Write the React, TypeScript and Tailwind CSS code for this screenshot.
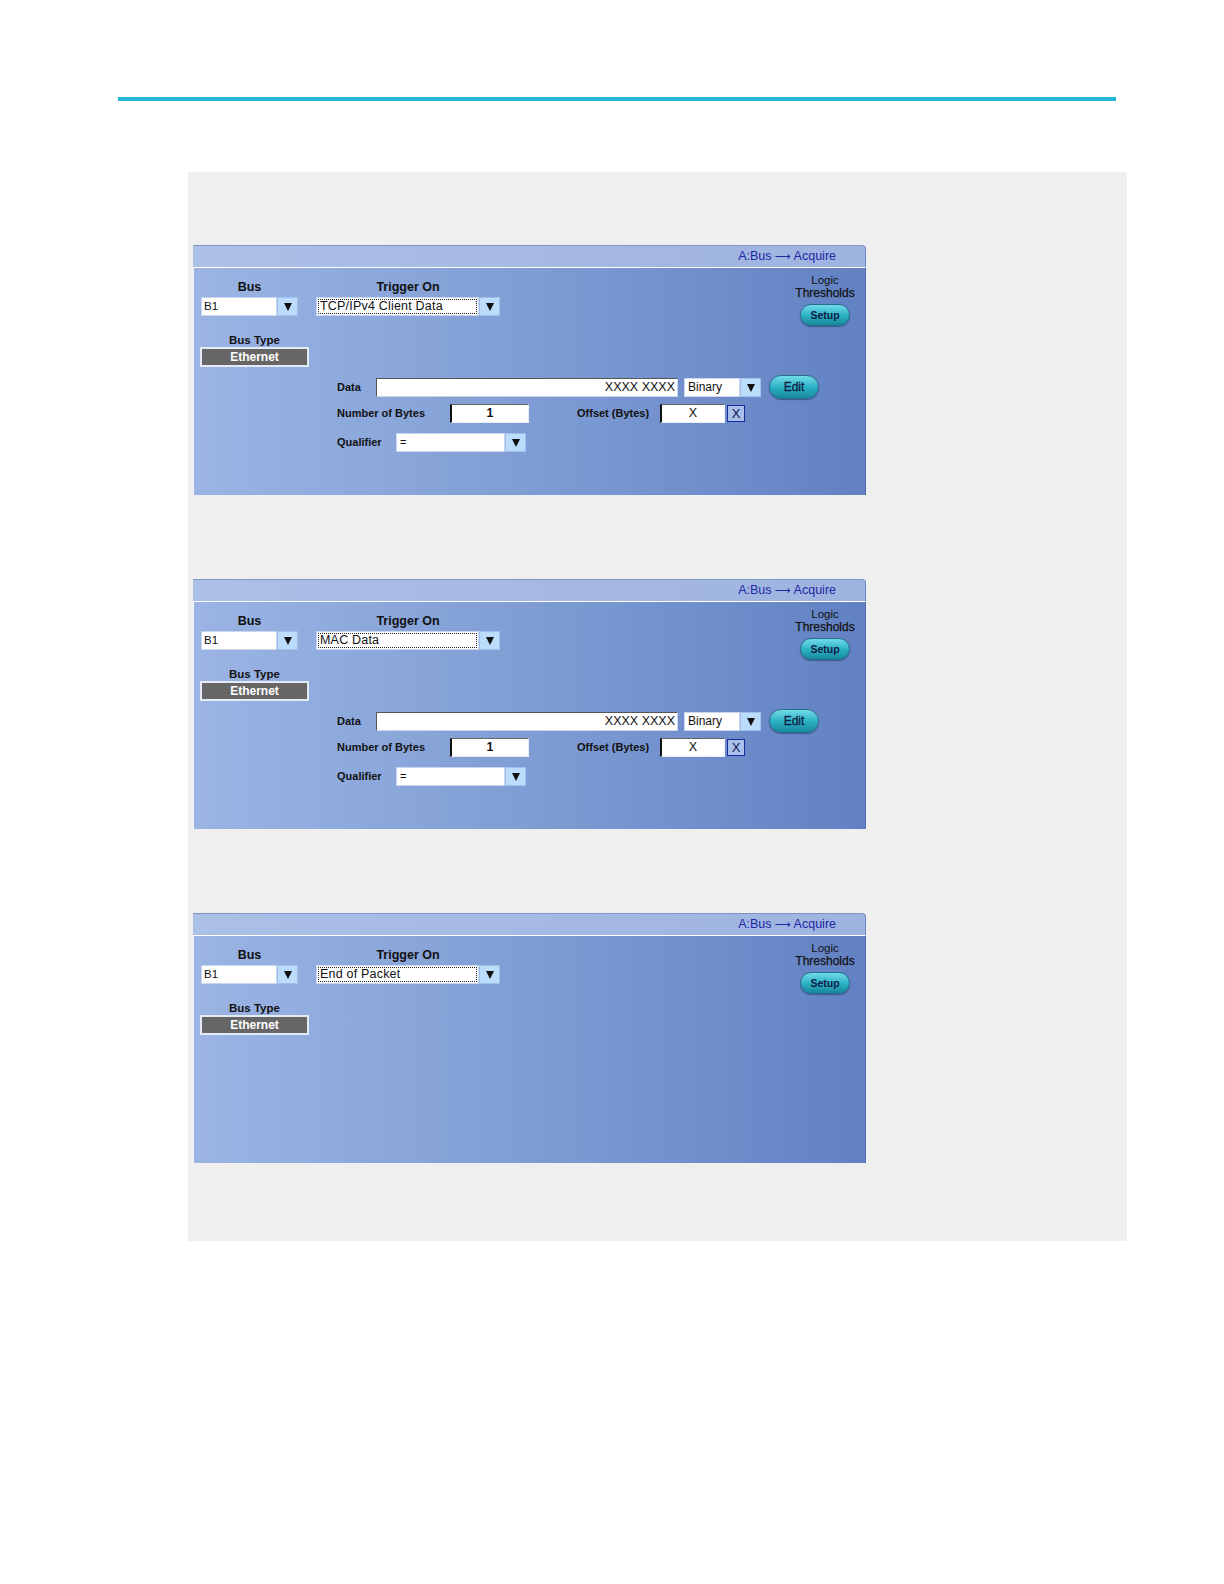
import React from 'react';

const FONT = { fontFamily: '"Liberation Sans", Arial, sans-serif' };

// small black down-triangle used on every drop-down button
const Arrow: React.FC = () => (
  <svg width="8" height="9" viewBox="0 0 8 9">
    <path d="M0 1h8L4 9z" fill="#111" />
  </svg>
);

const Select: React.FC<{
  text: string;
  width: string;
  dotted?: boolean;
  textClass?: string;
}> = ({ text, width, dotted, textClass = 'text-[11px]' }) => (
  <div className={`flex h-[19px] ${width}`}>
    <div className="flex-1 border border-[#c8d6ee] bg-white p-px">
      <div
        className={`flex h-full items-center pl-[1px] leading-none text-[#111] ${textClass} ${
          dotted ? 'border border-dotted border-[#222]' : ''
        }`}
      >
        {text}
      </div>
    </div>
    <div className="flex w-[21px] items-center justify-center border border-[#9fc0ea] bg-[#bcdcfb]">
      <Arrow />
    </div>
  </div>
);

const PillButton: React.FC<{ label: string; className: string; textClass: string }> = ({
  label,
  className,
  textClass,
}) => (
  <div
    className={`flex items-center justify-center rounded-full border border-[#27708c] bg-linear-to-b from-[#6fdbe8] via-[#2cb3c6] to-[#17889c] shadow-[0_1px_1px_rgba(20,40,90,0.5)] ${className}`}
  >
    <span className={`leading-none text-[#0f1c44] ${textClass}`}>{label}</span>
  </div>
);

const InsetField: React.FC<{ value: string; width: string; bold?: boolean }> = ({ value, width, bold }) => (
  <div
    className={`flex h-[19px] items-center justify-center border-l-2 border-t border-b border-r border-l-[#111] border-t-[#666] border-b-[#e8eef8] border-r-[#e8eef8] bg-white text-[12.5px] leading-none text-[#111] ${width} ${
      bold ? 'font-bold' : ''
    }`}
  >
    {value}
  </div>
);

const Label: React.FC<{ text: string; width: string; className?: string }> = ({ text, width, className = '' }) => (
  <div className={`shrink-0 text-[11px] font-bold leading-none text-[#111] ${width} ${className}`}>{text}</div>
);

const DataForm: React.FC = () => (
  <div className="mt-[8px] ml-[143px]">
    <div className="flex h-[24px] items-center">
      <Label text="Data" width="w-[39px]" />
      <div className="flex h-[19px] w-[302px] items-center justify-end border border-[#c8d6ee] border-t-[#555] border-l-[#555] bg-white pr-[2px] text-[12.5px] leading-none text-[#111]">
        XXXX XXXX
      </div>
      <div className="ml-[6px]">
        <Select text="Binary" width="w-[77px]" textClass="text-[12px] pl-[2px]" />
      </div>
      <PillButton
        label="Edit"
        className="ml-[8px] h-[24px] w-[50px]"
        textClass="text-[12px] [-webkit-text-stroke:0.3px_#0f1c44]"
      />
    </div>
    <div className="mt-[5px] flex h-[19px] items-center">
      <Label text="Number of Bytes" width="w-[113px]" />
      <InsetField value="1" width="w-[79px]" bold />
      <Label text="Offset (Bytes)" width="w-[83px]" className="ml-[48px]" />
      <InsetField value="X" width="w-[65px]" />
      <div className="ml-[2px] flex h-[17px] w-[18px] items-center justify-center border border-[#1d2a9c] bg-[#a9c0ea] text-[13px] leading-none text-[#0d1550]">
        X
      </div>
    </div>
    <div className="mt-[10px] flex h-[19px] items-center">
      <Label text="Qualifier" width="w-[59px]" />
      <Select text="=" width="w-[130px]" textClass="text-[11px] pl-[2px]" />
    </div>
  </div>
);

const BusPanel: React.FC<{ trigger: string; showData: boolean }> = ({ trigger, showData }) => (
  <div className="flex h-[250px] w-[673px] flex-col" style={FONT}>
    <header className="flex h-[23px] shrink-0 items-center justify-end rounded-tr-[4px] border-t border-r border-t-[#7f95c8] border-r-[#6f86c0] border-b border-b-white bg-linear-to-r from-[#abbfe7] to-[#9fb3e0] pr-[29px]">
      <span className="text-[12.5px] leading-none text-[#2128a2]">
        A:Bus <span className="font-['DejaVu_Sans'] text-[11px]">⟶</span> Acquire
      </span>
    </header>
    <div className="flex-1 border-r border-r-[#4d68ad] border-l border-l-[#eef2fa] bg-linear-to-r from-[#9bb4e4] via-[#7f9dd4] to-[#6281c3] pt-[6px]">
      <div className="flex items-start pl-[6px]">
        <div className="mt-[6px] flex w-[109px] flex-col">
          <div className="ml-px w-[97px] text-center text-[12.5px] font-bold leading-[14px] text-[#111]">Bus</div>
          <div className="mt-[3px] ml-px">
            <Select text="B1" width="w-[97px]" textClass="text-[11.5px] pl-[1px]" />
          </div>
          <div className="mt-[17px] text-center text-[11.5px] font-bold leading-[14px] text-[#111]">Bus Type</div>
          <div className="flex h-[20px] items-center justify-center border-2 border-[#e4ebf7] bg-[#666666] text-[12px] font-bold leading-none text-white">
            Ethernet
          </div>
        </div>
        <div className="mt-[6px] ml-[7px] flex w-[184px] flex-col">
          <div className="text-center text-[12.5px] font-bold leading-[14px] text-[#111]">Trigger On</div>
          <div className="mt-[3px]">
            <Select text={trigger} width="w-[184px]" dotted textClass="text-[12.5px] tracking-[0.2px]" />
          </div>
        </div>
        <div className="mr-[9px] ml-auto flex w-[62px] flex-col items-center">
          <div className="text-[11.5px] leading-[13px] text-[#111]">Logic</div>
          <div className="text-[12px] leading-[13px] text-[#111] [-webkit-text-stroke:0.25px_#111]">Thresholds</div>
          <PillButton label="Setup" className="mt-[4px] h-[22px] w-[50px]" textClass="text-[10.5px] font-bold" />
        </div>
      </div>
      {showData && <DataForm />}
    </div>
  </div>
);

export default function App() {
  return (
    <div className="h-[1584px] w-[1224px] bg-white pt-[97px]" style={FONT}>
      <div className="ml-[118px] h-[4px] w-[998px] bg-[#22b7d6]" />
      <div className="mt-[71px] ml-[188px] flex h-[1069px] w-[939px] flex-col gap-[84px] bg-[#efefef] pt-[73px] pl-[5px]">
        <BusPanel trigger="TCP/IPv4 Client Data" showData />
        <BusPanel trigger="MAC Data" showData />
        <BusPanel trigger="End of Packet" showData={false} />
      </div>
    </div>
  );
}
